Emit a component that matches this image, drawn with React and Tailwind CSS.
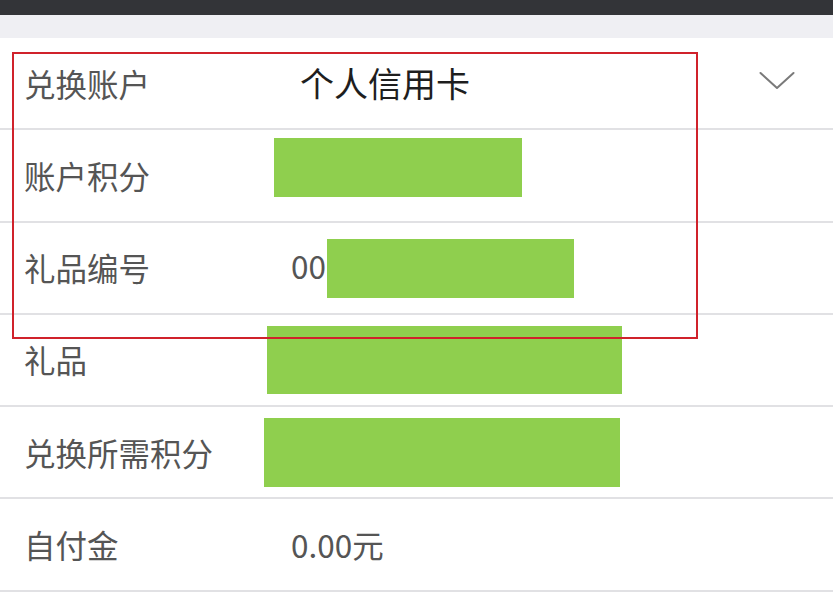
import React from "react";

const font = {
  fontFamily: '"Noto Sans CJK SC", "Noto Sans", sans-serif',
};

function Row({ label, children, className = "" }) {
  return (
    <div
      className={
        "flex h-[92.3px] border-b-2 border-[#e1e1e4] bg-white " + className
      }
    >
      <div className="flex w-[264px] shrink-0 items-center pl-[24px] text-[31.5px] text-[#555555]">
        {label}
      </div>
      {children}
    </div>
  );
}

function Chevron() {
  return (
    <svg width="36" height="20" viewBox="0 0 36 20" fill="none">
      <path
        d="M1.5 2 L18 17 L34.5 2"
        stroke="#7a7a7a"
        strokeWidth="2"
        strokeLinecap="round"
        strokeLinejoin="round"
      />
    </svg>
  );
}

export default function App() {
  return (
    <div
      className="relative h-[598px] w-[833px] overflow-hidden bg-white"
      style={font}
    >
      <div className="h-[15px] bg-[#333438]" />
      <div className="h-[23px] bg-[#efeff3]" />

      <Row label="兑换账户">
        <div className="ml-[36px] flex items-center pb-[2px] text-[34px] text-[#1e1e1e]">
          个人信用卡
        </div>
        <div className="ml-auto mr-[38px] flex items-center pb-[4px]">
          <Chevron />
        </div>
      </Row>

      <Row label="账户积分">
        <div className="ml-[10px] mt-[8px] h-[59px] w-[248px] bg-[#8fcf4e]" />
      </Row>

      <Row label="礼品编号">
        <div className="ml-[27px] flex items-start">
          <span className="mt-[20px] text-[31.5px] leading-[44px] text-[#555555]">
            00
          </span>
          <div className="ml-[1px] mt-[16px] h-[59px] w-[247px] bg-[#8fcf4e]" />
        </div>
      </Row>

      <Row label="礼品">
        <div className="ml-[3px] mt-[11px] h-[68px] w-[355px] bg-[#8fcf4e]" />
      </Row>

      <Row label="兑换所需积分">
        <div className="mt-[11px] h-[69px] w-[356px] bg-[#8fcf4e]" />
      </Row>

      <Row label="自付金">
        <div className="ml-[27px] flex items-center text-[31.5px] text-[#555555]">
          0.00元
        </div>
      </Row>

      {/* annotation box */}
      <div className="pointer-events-none absolute left-[12px] top-[52px] h-[287px] w-[686px] border-2 border-[#d0222b]" />
    </div>
  );
}
